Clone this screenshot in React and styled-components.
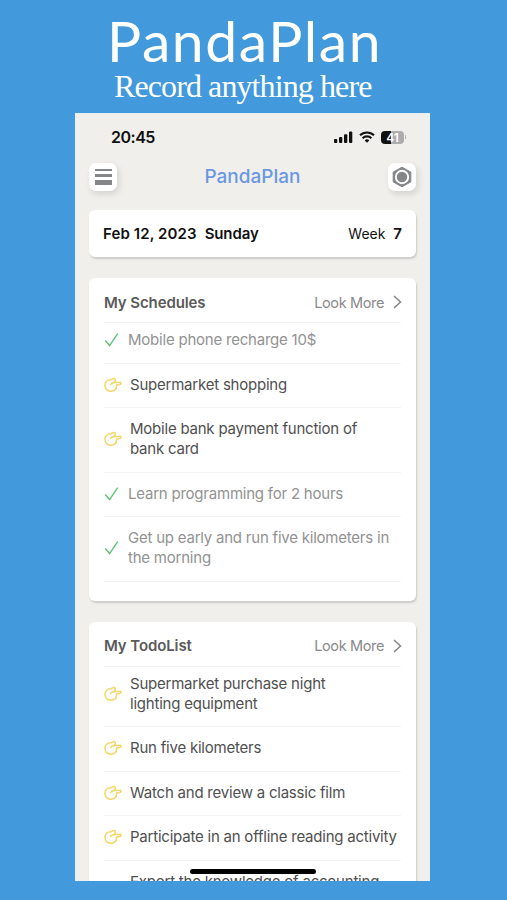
import React from "react";
import styled, { createGlobalStyle } from "styled-components";

const schedules = [
  { text: ["Mobile phone recharge 10$"], done: true },
  { text: ["Supermarket shopping"] },
  { text: ["Mobile bank payment function of", "bank card"] },
  { text: ["Learn programming for 2 hours"], done: true },
  { text: ["Get up early and run five kilometers in", "the morning"], done: true },
];

const todos = [
  { text: ["Supermarket purchase night", "lighting equipment"] },
  { text: ["Run five kilometers"] },
  { text: ["Watch and review a classic film"] },
  { text: ["Participate in an offline reading activity"] },
  { text: ["Export the knowledge of accounting"], tall: true },
];

const CheckIcon = () => (
  <svg width="15" height="16" viewBox="0 0 15 16" fill="none" stroke="#66c47a" strokeWidth="1.5">
    <path d="M1.2 8.4 5.600 13.600 13.700 1.600" />
  </svg>
);

const HandIcon = () => (
  <svg width="18" height="16" viewBox="0 0 18 16" fill="none" stroke="#f5d565" strokeWidth="1.5" strokeLinejoin="round" strokeLinecap="round">
    <path d="M10.400 1.500C9.200 1.200 8.200 2.200 7 2.700 3.400 2.600 1 4.900 1 8.300c0 3.600 2.500 5.900 5.900 5.900 3.900 0 6.100-2.400 5.500-6l3.800-.9c1.300-.5 1-2.200-.5-2.100l-5.500.2c1.300-1.200 1.600-3.200.2-3.900Z" />
    <path d="M10.200 5.400C8.300 5.700 7 6.300 6.500 7.600" />
  </svg>
);

const SignalIcon = () => (
  <svg width="19" height="12" viewBox="0 0 19 12" fill="#111">
    <rect x="0" y="8" width="3.300" height="4" rx="1" />
    <rect x="5" y="6" width="3.300" height="6" rx="1" />
    <rect x="10" y="3.300" width="3.300" height="8.700" rx="1" />
    <rect x="15" y="0.500" width="3.300" height="11.500" rx="1" />
  </svg>
);

const WifiIcon = () => (
  <svg width="16" height="12" viewBox="0 0 16 12" fill="none" stroke="#111" strokeWidth="2.1">
    <path d="M1 4.300a10 10 0 0 1 14 0" />
    <path d="M3.600 7.200a6.300 6.300 0 0 1 8.800 0" />
    <path d="M8 11.800 5.700 9.400a3.300 3.300 0 0 1 4.600 0Z" fill="#111" stroke="none" />
  </svg>
);

const HexIcon = () => (
  <svg width="22" height="22" viewBox="0 0 22 22">
    <path d="M11 1.200 19.800 6.100V15.900L11 20.800 2.200 15.900V6.100Z" fill="#858688" stroke="#858688" strokeLinejoin="round" />
    <circle cx="11" cy="11" r="6.200" fill="#858688" stroke="#fff" strokeWidth="1.900" />
  </svg>
);

const ListCard = ({ title, items }) => (
  <Card>
    <CardHeader>
      <CardTitle>{title}</CardTitle>
      <LookMore>
        Look More
        <svg width="9" height="14" viewBox="0 0 9 14" fill="none" stroke="#858585" strokeWidth="1.500">
          <path d="M1 1 7.500 7 1 13" />
        </svg>
      </LookMore>
    </CardHeader>
    {items.map(({ text, done, tall }) => (
      <Item key={text[0]} $done={done}>
        {done ? <CheckIcon /> : <HandIcon />}
        <ItemText $done={done} $tall={tall}>
          {text.map((line) => <span key={line}>{line}</span>)}
        </ItemText>
      </Item>
    ))}
  </Card>
);

export default function App() {
  return (
    <>
      <GlobalStyle />
      <Page>
        <Brand>PandaPlan</Brand>
        <Slogan>Record anything here</Slogan>
        <Screen>
          <StatusBar>
            <Clock>20:45</Clock>
            <StatusIcons>
              <SignalIcon />
              <WifiIcon />
              <Battery><Level>41</Level><Tip /></Battery>
            </StatusIcons>
          </StatusBar>
          <NavBar>
            <NavButton>
              <MenuBar $height={2} />
              <MenuBar $height={3} />
              <MenuBar $height={5} />
            </NavButton>
            <NavTitle>PandaPlan</NavTitle>
            <NavButton><HexIcon /></NavButton>
          </NavBar>
          <DateCard>
            <DateText><DayText>Feb 12, 2023</DayText><span>Sunday</span></DateText>
            <Week>Week <b>7</b></Week>
          </DateCard>
          <ListCard title="My Schedules" items={schedules} />
          <ListCard title="My TodoList" items={todos} />
          <HomeIndicator />
        </Screen>
      </Page>
    </>
  );
}

const GlobalStyle = createGlobalStyle`
  * {
    box-sizing: border-box;
  }
  body {
    margin: 0;
    background: #4299db;
  }
`;

const Page = styled.div`
  display: flex;
  flex-direction: column;
  align-items: flex-start;
  width: 507px;
  height: 900px;
  overflow: hidden;
  background: #4299db;
  color: #fff;
  font-family: Inter, "Liberation Sans", sans-serif;
`;

const Brand = styled.h1`
  margin: 8px 0 0 107px;
  height: 64px;
  line-height: 64px;
  font-family: Lato, sans-serif;
  font-weight: 400;
  font-size: 57px;
  letter-spacing: 1.600px;
  white-space: nowrap;
`;

const Slogan = styled.p`
  margin: 0 0 0 114px;
  height: 41px;
  line-height: 28px;
  font-family: "Liberation Serif", serif;
  font-size: 32px;
  letter-spacing: -0.9px;
  white-space: nowrap;
`;

const Screen = styled.main`
  position: relative;
  display: flex;
  flex-direction: column;
  width: 355px;
  height: 768px;
  margin-left: 75px;
  padding: 0 13px;
  overflow: hidden;
  border: 1px solid #e5f0f6;
  border-bottom: none;
  background: #f0efec;
  color: #111;
`;

const StatusBar = styled.div`
  display: flex;
  flex: none;
  justify-content: space-between;
  align-items: center;
  height: 46px;
  padding: 0 10px 0 22px;
`;

const Clock = styled.span`
  font-weight: 600;
  font-size: 16px;
  letter-spacing: -0.5px;
`;

const StatusIcons = styled.div`
  display: flex;
  align-items: center;
  gap: 6px;
`;

const Battery = styled.div`
  display: flex;
  align-items: center;
  gap: 1px;
`;

const Level = styled.span`
  width: 23px;
  height: 13px;
  border-radius: 4px;
  background: linear-gradient(to right, #111 42%, #adadad 42%);
  color: #fff;
  font-weight: 600;
  font-size: 12px;
  line-height: 13px;
  text-align: center;
`;

const Tip = styled.i`
  width: 1px;
  height: 4px;
  border-radius: 1px;
  background: #b5b5b5;
`;

const NavBar = styled.header`
  display: flex;
  flex: none;
  justify-content: space-between;
  align-items: center;
  height: 34px;
  margin-bottom: 16px;
`;

const NavButton = styled.div`
  display: flex;
  flex-direction: column;
  justify-content: center;
  align-items: center;
  gap: 3px;
  width: 28px;
  height: 28px;
  border-radius: 7px;
  background: #fff;
  box-shadow: 2px 3px 6px rgba(0, 0, 0, 0.12);
`;

const MenuBar = styled.i`
  width: 17px;
  height: ${({ $height }) => $height}px;
  background: #858688;
`;

const NavTitle = styled.h2`
  margin: 0;
  color: #6b98e0;
  font-weight: 500;
  font-size: 19px;
  line-height: 22px;
`;

const Card = styled.section`
  flex: none;
  margin-bottom: 21px;
  padding: 0 15px 18.500px;
  border-radius: 6px;
  background: #fff;
  box-shadow: 1px 2px 2px rgba(0, 0, 0, 0.15);
`;

const DateCard = styled(Card)`
  display: flex;
  justify-content: space-between;
  align-items: center;
  height: 47px;
  padding: 0 14px;
  font-size: 15px;
`;

const DateText = styled.div`
  display: flex;
  gap: 8px;
  font-weight: 600;
  letter-spacing: -0.1px;
`;

const DayText = styled.span`
  letter-spacing: 0.1px;
`;

const Week = styled.div`
  font-size: 14px;
  b {
    margin-left: 4px;
    font-weight: 600;
    font-size: 15px;
  }
`;

const CardHeader = styled.div`
  display: flex;
  justify-content: space-between;
  align-items: center;
  height: 45px;
  padding-top: 4px;
  border-bottom: 1px solid #f3f3f3;
`;

const CardTitle = styled.h3`
  margin: 0;
  color: #5a5a5a;
  font-weight: 600;
  font-size: 15px;
  letter-spacing: -0.1px;
`;

const LookMore = styled.div`
  display: flex;
  align-items: center;
  gap: 9px;
  margin-right: -1px;
  color: #8a8a8a;
  font-size: 14.500px;
  letter-spacing: -0.360px;
`;

const Item = styled.div`
  display: flex;
  align-items: center;
  gap: ${({ $done }) => ($done ? 9 : 8)}px;
  padding: 10.900px 0 12.700px;
  border-bottom: 1px solid #f3f3f3;
  ${CardHeader} + & {
    padding-top: 7px;
  }
  svg {
    flex: none;
  }
`;

const ItemText = styled.div`
  display: flex;
  flex-direction: column;
  min-height: ${({ $tall }) => ($tall ? 40 : 20)}px;
  color: ${({ $done }) => ($done ? "#929292" : "#505050")};
  font-size: 15px;
  line-height: 20px;
  letter-spacing: -0.22px;
  white-space: nowrap;
`;

const HomeIndicator = styled.div`
  position: absolute;
  bottom: 7px;
  left: 114px;
  width: 126px;
  height: 5px;
  border-radius: 3px;
  background: #000;
`;
